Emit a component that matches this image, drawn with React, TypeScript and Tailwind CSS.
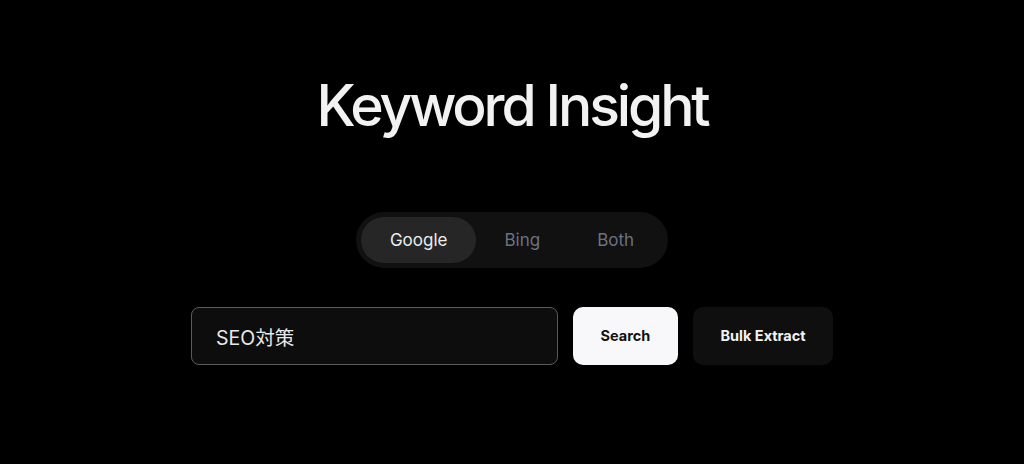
import { useState } from 'react'

const engines = ['Google', 'Bing', 'Both']

export default function App() {
  const [engine, setEngine] = useState('Google')
  const [query, setQuery] = useState('SEO対策')

  return (
    <div className="min-h-[464px] w-full bg-black flex flex-col items-center pt-[77px] font-['Inter','Noto_Sans_CJK_JP',sans-serif]">
      <h1 className="text-[57px] leading-none font-medium tracking-[-0.055em] text-[#f2f2f2]">
        Keyword Insight
      </h1>

      {/* Engine toggle */}
      <div className="mt-[78px] flex items-center rounded-full bg-[#111111] p-[5px]">
        {engines.map(name => (
          <button
            key={name}
            onClick={() => setEngine(name)}
            className={
              name === engine
                ? 'rounded-full bg-[#262626] px-[28.5px] py-[11px] text-[17px] leading-6 text-[#ececec]'
                : 'rounded-full px-[28.5px] py-[11px] text-[17px] leading-6 text-[#6b7280]'
            }
          >
            {name}
          </button>
        ))}
      </div>

      {/* Search row */}
      <div className="mt-[39px] flex items-center gap-[15px]">
        <input
          value={query}
          onChange={e => setQuery(e.target.value)}
          className="h-[58px] w-[367px] rounded-lg border border-[#5a5a5a] bg-[#0d0d0d] px-6 text-[19.5px] text-[#e8e8e8] outline-none"
        />
        <button className="h-[58px] w-[105px] rounded-[10px] bg-[#f8f8fa] text-[14.5px] font-bold text-[#111111]">
          Search
        </button>
        <button className="h-[58px] w-[140px] rounded-[10px] bg-[#0f0f0f] text-[14.5px] font-bold text-[#f2f2f2]">
          Bulk Extract
        </button>
      </div>
    </div>
  )
}
